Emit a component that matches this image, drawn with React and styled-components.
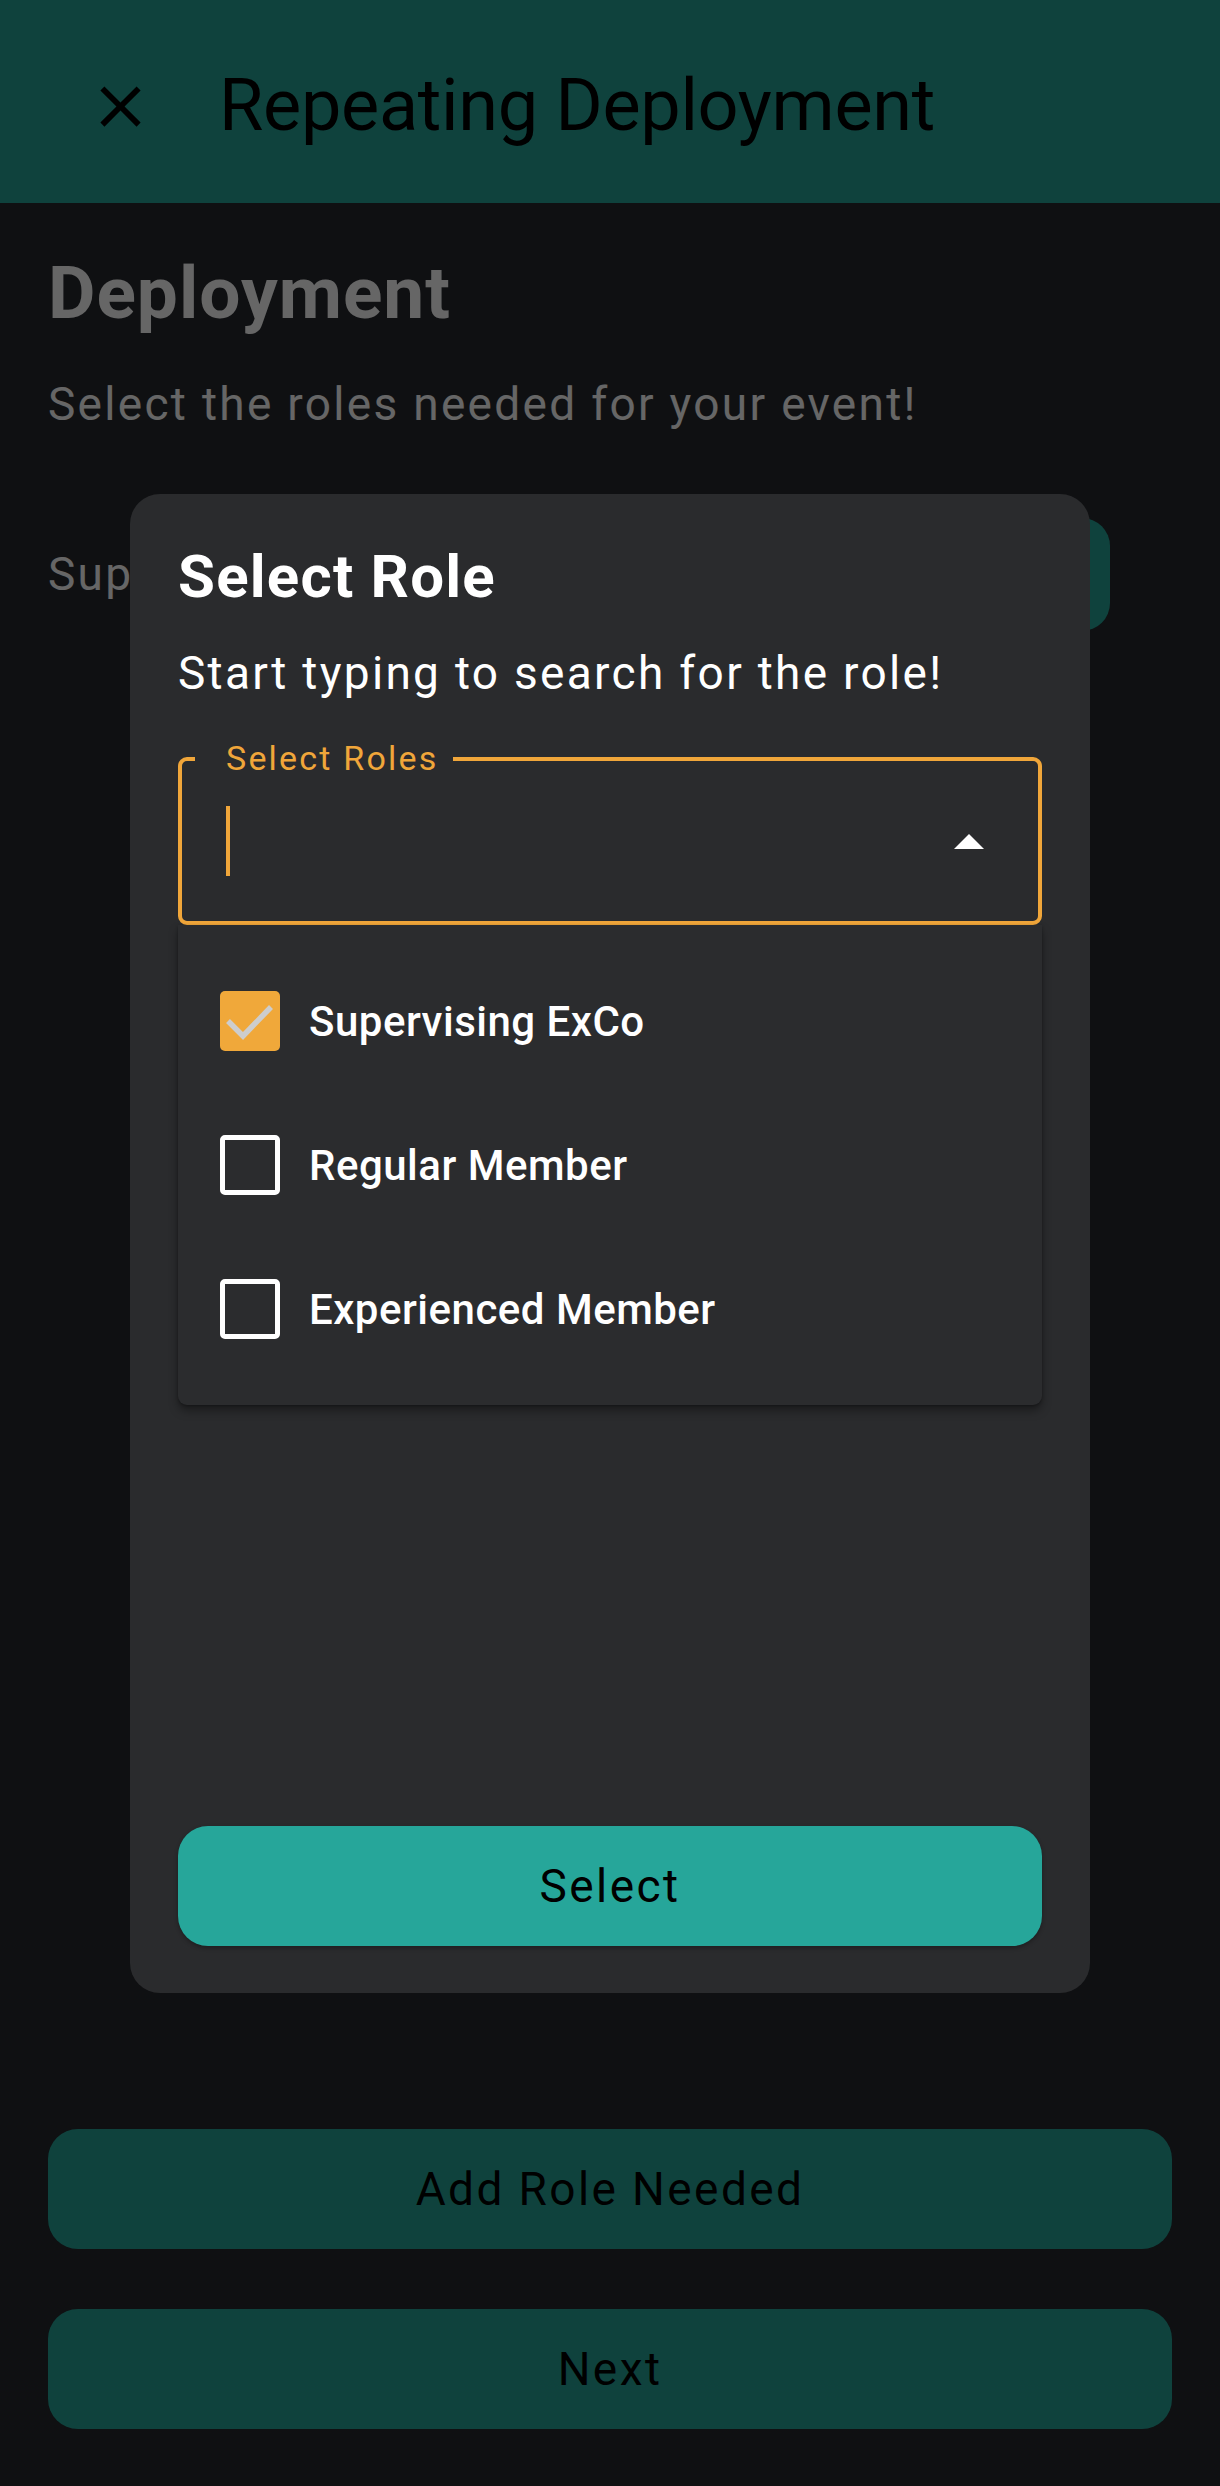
import React from "react";
import styled, { createGlobalStyle } from "styled-components";

const GlobalStyle = createGlobalStyle`
  html, body { margin: 0; padding: 0; }
  body {
    background: #26282d;
    font-family: Roboto, "Noto Sans", "Liberation Sans", sans-serif;
    -webkit-font-smoothing: antialiased;
  }
  * { box-sizing: border-box; }
`;

const Page = styled.div`
  position: relative;
  width: 1220px;
  min-height: 2486px;
  display: flex;
  flex-direction: column;
  background: #26282d;
`;

const AppBar = styled.header`
  height: 203px;
  background: #26a69a;
  display: flex;
  align-items: center;
  padding: 10px 0 0 86px;
  gap: 64px;
`;

const IconButton = styled.button`
  width: 69px;
  height: 69px;
  padding: 0;
  border: none;
  background: transparent;
  display: flex;
  align-items: center;
  justify-content: center;
  color: #000;
`;

const AppTitle = styled.h1`
  margin: 0;
  font-size: 72px;
  font-weight: 400;
  color: #000;
  line-height: 1.2;
  letter-spacing: -0.3px;
`;

const Content = styled.main`
  flex: 1;
  display: flex;
  flex-direction: column;
  padding: 47px 48px 57px;
`;

const Heading = styled.h2`
  margin: 0;
  font-size: 73px;
  font-weight: 700;
  line-height: 1.2;
  color: #fff;
  letter-spacing: 1px;
`;

const Subtitle = styled.p`
  margin: 39px 0 0;
  font-size: 46px;
  line-height: 1.2;
  color: #fff;
  letter-spacing: 2.3px;
`;

const RoleRow = styled.div`
  margin-top: 86px;
  height: 113px;
  display: flex;
  align-items: center;
  justify-content: space-between;
  padding-right: 62px;
`;

const RoleName = styled.span`
  font-size: 46px;
  color: #fff;
  letter-spacing: 2.3px;
`;

const CountButton = styled.div`
  width: 300px;
  height: 113px;
  border-radius: 28px;
  background: #26a69a;
`;

const Spacer = styled.div`
  flex: 1;
`;

const ActionButtons = styled.div`
  display: flex;
  flex-direction: column;
  gap: 60px;
`;

const TealButton = styled.button`
  width: 100%;
  height: 120px;
  border: none;
  border-radius: 30px;
  background: #26a69a;
  color: #000;
  font-family: inherit;
  font-size: 46px;
  font-weight: 400;
  letter-spacing: 2.4px;
  display: flex;
  align-items: center;
  justify-content: center;
  cursor: pointer;
`;

const Scrim = styled.div`
  position: absolute;
  inset: 0;
  background: rgba(0, 0, 0, 0.6);
`;

const Dialog = styled.section`
  position: absolute;
  top: 494px;
  left: 130px;
  width: 960px;
  height: 1499px;
  background: #2a2b2d;
  border-radius: 30px;
  padding: 47px 48px 47px;
  display: flex;
  flex-direction: column;
`;

const DialogTitle = styled.h3`
  margin: 0;
  font-size: 60px;
  font-weight: 700;
  line-height: 1.2;
  color: #fff;
  letter-spacing: 1.2px;
`;

const DialogText = styled.p`
  margin: 33px 0 0;
  font-size: 46px;
  line-height: 1.2;
  color: #fff;
  letter-spacing: 2.3px;
`;

const FieldWrap = styled.div`
  position: relative;
  margin-top: 56px;
`;

const Outline = styled.div`
  position: relative;
  height: 168px;
  border: 4px solid #f0a63a;
  border-radius: 9px;
  display: flex;
  align-items: center;
  padding: 0 54px 0 44px;
`;

const FloatingLabel = styled.span`
  position: absolute;
  top: -27px;
  left: 13px;
  padding: 0 15px 0 31px;
  background: #2a2b2d;
  color: #f0a63a;
  font-size: 34px;
  line-height: 48px;
  letter-spacing: 2.2px;
`;

const Caret = styled.span`
  width: 4px;
  height: 70px;
  background: #f0a63a;
`;

const Grow = styled.div`
  flex: 1;
`;

const Menu = styled.ul`
  position: absolute;
  top: 100%;
  left: 0;
  right: 0;
  margin: 0;
  list-style: none;
  padding: 24px 0;
  background: #2b2c2e;
  border-radius: 0 0 9px 9px;
  box-shadow: 0 6px 10px rgba(0, 0, 0, 0.35), 0 1px 3px rgba(0, 0, 0, 0.3);
`;

const MenuItem = styled.li`
  height: 144px;
  display: flex;
  align-items: center;
  gap: 29px;
  padding-left: 42px;
`;

const Box = styled.span`
  width: 60px;
  height: 60px;
  border-radius: 5px;
  flex: none;
  display: flex;
  align-items: center;
  justify-content: center;
  background: ${(p) => (p.$checked ? "#f0a83a" : "transparent")};
  border: ${(p) => (p.$checked ? "none" : "5px solid #fff")};
`;

const ItemLabel = styled.span`
  font-size: 42px;
  font-weight: 500;
  color: #fff;
  letter-spacing: 0.5px;
`;

const SelectButton = styled(TealButton)`
  margin-top: auto;
  box-shadow: 0 2px 4px rgba(0, 0, 0, 0.3);
`;

const CloseIcon = () => (
  <svg width="69" height="69" viewBox="0 0 24 24" fill="currentColor">
    <path d="M19 6.41 17.59 5 12 10.59 6.41 5 5 6.41 10.59 12 5 17.59 6.41 19 12 13.41 17.59 19 19 17.59 13.41 12z" />
  </svg>
);

const ArrowUp = () => (
  <svg width="30" height="15" viewBox="0 0 30 15">
    <path d="M0 15 L15 0 L30 15 Z" fill="#fff" />
  </svg>
);

const Check = () => (
  <svg width="60" height="60" viewBox="0 0 60 60">
    <path d="M8 30 L23 45 L51 16" fill="none" stroke="#cdcdcd" strokeWidth="5.5" />
  </svg>
);

const roles = [
  { name: "Supervising ExCo", checked: true },
  { name: "Regular Member", checked: false },
  { name: "Experienced Member", checked: false },
];

export default function App() {
  return (
    <>
      <GlobalStyle />
      <Page>
        <AppBar>
          <IconButton aria-label="Close">
            <CloseIcon />
          </IconButton>
          <AppTitle>Repeating Deployment</AppTitle>
        </AppBar>
        <Content>
          <Heading>Deployment</Heading>
          <Subtitle>Select the roles needed for your event!</Subtitle>
          <RoleRow>
            <RoleName>Supervising ExCo</RoleName>
            <CountButton />
          </RoleRow>
          <Spacer />
          <ActionButtons>
            <TealButton>Add Role Needed</TealButton>
            <TealButton>Next</TealButton>
          </ActionButtons>
        </Content>
        <Scrim />
        <Dialog role="dialog">
          <DialogTitle>Select Role</DialogTitle>
          <DialogText>Start typing to search for the role!</DialogText>
          <FieldWrap>
            <Outline>
              <FloatingLabel>Select Roles</FloatingLabel>
              <Caret />
              <Grow />
              <ArrowUp />
            </Outline>
            <Menu>
              {roles.map((r) => (
                <MenuItem key={r.name}>
                  <Box $checked={r.checked}>{r.checked && <Check />}</Box>
                  <ItemLabel>{r.name}</ItemLabel>
                </MenuItem>
              ))}
            </Menu>
          </FieldWrap>
          <SelectButton>Select</SelectButton>
        </Dialog>
      </Page>
    </>
  );
}
